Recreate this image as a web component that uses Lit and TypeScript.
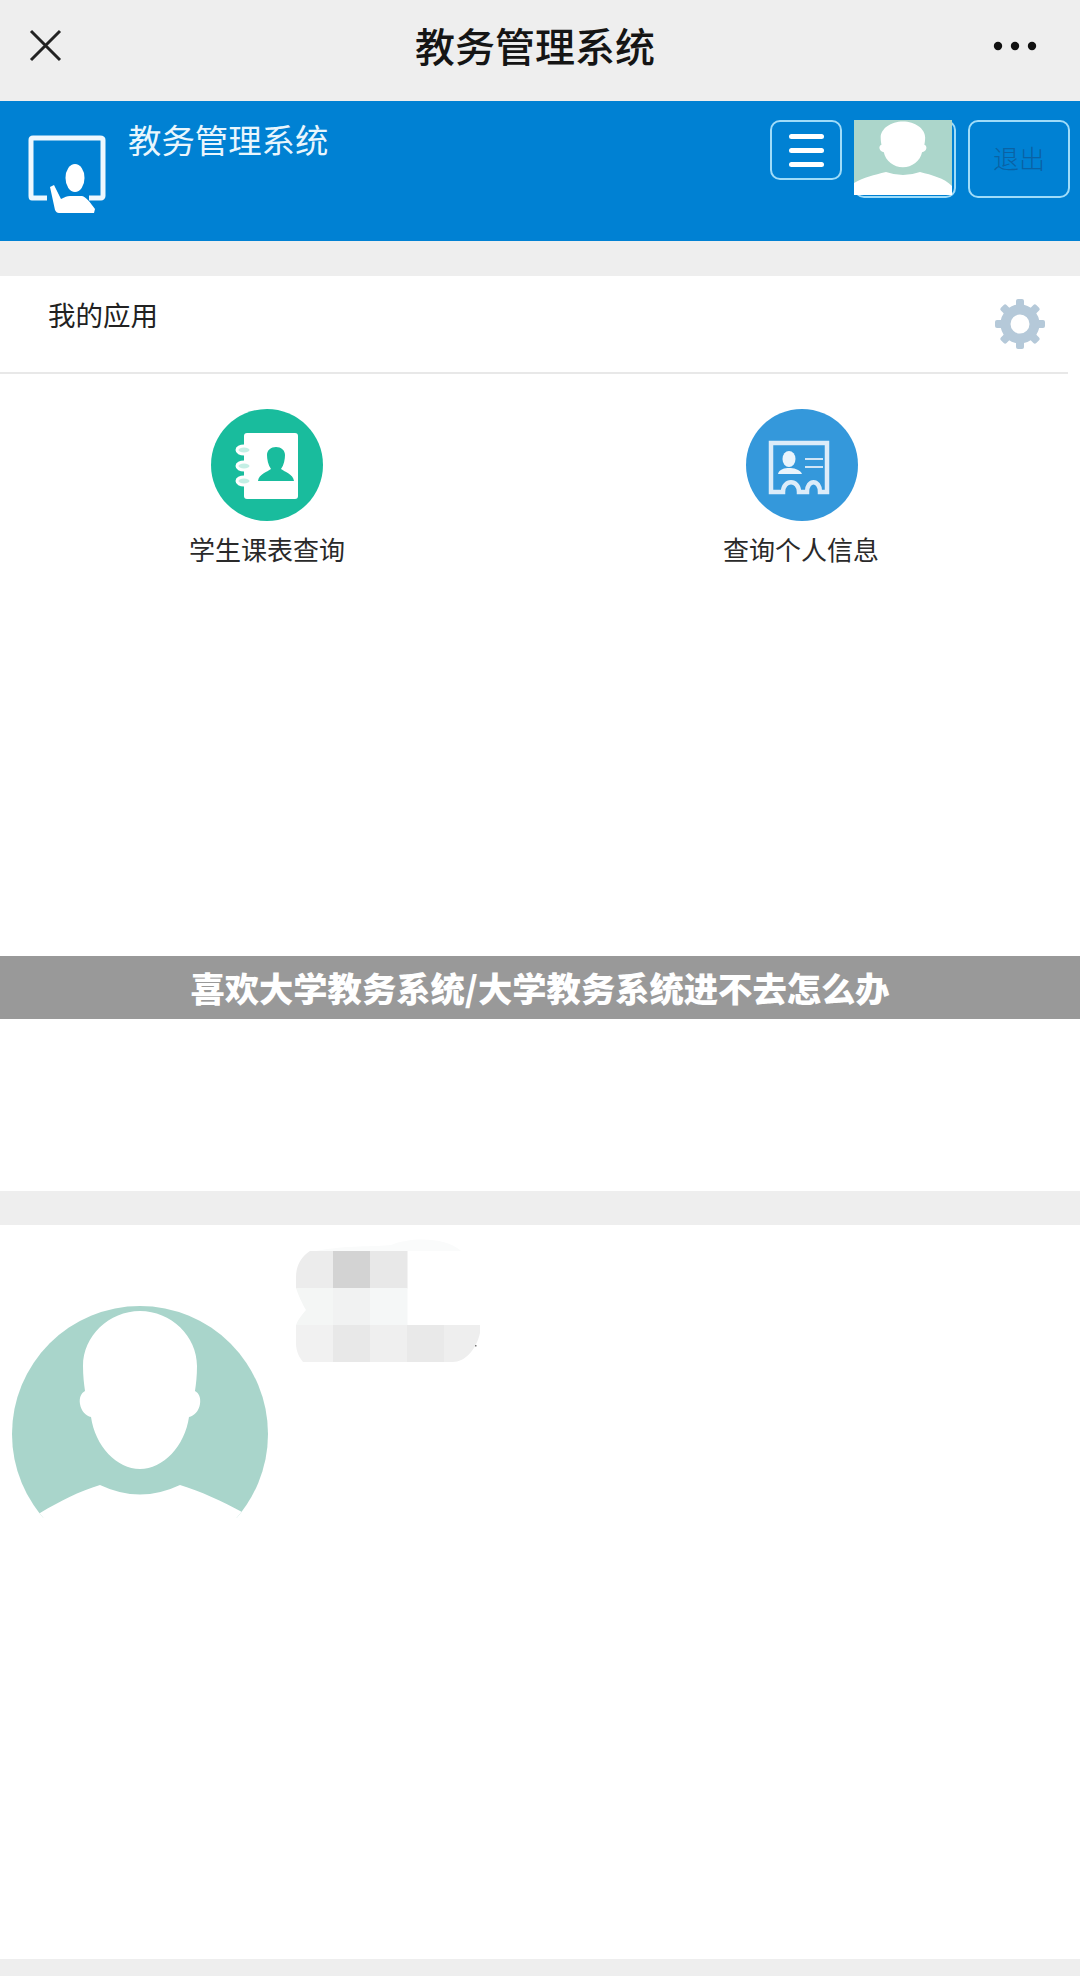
import { LitElement, html, css, svg } from "lit";
import { customElement } from "lit/decorators.js";

const headPath = "M128 5C97 5 71 30 71 60C71 70 72 78 73 85C69 87 67 92 68 98C69 105 74 110 79 111C83 140 105 163 128 163C151 163 173 140 177 111C182 110 187 105 188 98C189 92 187 87 183 85C184 78 185 70 185 60C185 30 159 5 128 5Z";

const pixels: [number, number, string][] = [
  [0, 0, "#ececec"], [1, 0, "#d3d3d3"], [2, 0, "#e8e8e8"],
  [0, 1, "#f4f6f5"], [1, 1, "#f1f2f2"], [2, 1, "#f5f7f7"],
  [0, 2, "#f1f1f1"], [1, 2, "#e8e8e8"], [2, 2, "#efefef"], [3, 2, "#e9e9e9"], [4, 2, "#eeeeee"],
];

const teeth = [0, 45, 90, 135, 180, 225, 270, 315];

@customElement("app-root")
export class AppRoot extends LitElement {
  static styles = css`
    :host { display: block; width: 1080px; height: 1976px; background: #eeeeee; font-family: "Noto Sans CJK SC", "Noto Sans", sans-serif; overflow: hidden; }
    * { box-sizing: border-box; }
    svg { display: block; }
    .topbar { height: 101px; display: flex; align-items: center; justify-content: space-between; padding: 0 41px 10px 28px; background: #eeeeee; }
    .top-title { font-size: 40px; line-height: 56px; font-weight: 500; color: #151515; margin-left: 14px; padding-bottom: 2px; }
    .banner-head { height: 140px; background: #0081d3; display: flex; padding: 19px 10px 0 28px; }
    .logo { margin-top: 15px; flex: none; }
    .head-title { font-size: 33.4px; line-height: 46px; color: #e9f6fd; margin-left: 20px; margin-top: -4px; flex: 1; }
    .head-btns { display: flex; gap: 12px; align-items: flex-start; }
    .btn { border: 2px solid #9fdcf9; border-radius: 10px; display: flex; align-items: center; justify-content: center; }
    .menu { width: 72px; height: 60px; flex-direction: column; gap: 9px; padding-top: 1px; }
    .menu span { display: block; width: 35px; height: 5px; background: #ffffff; border-radius: 3px; }
    .avatar-btn { width: 102px; height: 78px; align-items: flex-start; justify-content: flex-start; }
    .avatar-btn svg { margin: -2px 0 0 -2px; }
    .exit { width: 102px; height: 78px; font-size: 26px; color: #0a62a4; font-weight: 300; padding-bottom: 4px; }
    .card { background: #ffffff; margin-top: 35px; height: 915px; }
    .card-head { width: 1068px; height: 98px; border-bottom: 2px solid #e8e8e8; display: flex; align-items: flex-start; justify-content: space-between; padding: 19px 13px 0 48px; font-size: 27.5px; line-height: 38px; color: #222222; }
    .gear { margin-right: 9px; margin-top: 3px; }
    .apps { width: 1068px; display: grid; grid-template-columns: 1fr 1fr; padding-top: 35px; }
    .app { display: flex; flex-direction: column; align-items: center; gap: 10px; }
    .app-label { font-size: 26px; line-height: 36px; color: #2a2a2a; white-space: nowrap; }
    .nudge { margin-left: 2px; }
    .notice { margin-top: 389px; height: 63px; background: #999999; color: #ffffff; font-size: 34.3px; font-weight: 900; line-height: 63px; text-align: center; white-space: nowrap; }
    .profile { background: #ffffff; margin-top: 34px; height: 734px; display: flex; align-items: flex-start; padding-left: 12px; }
    .big-avatar { margin-top: 81px; flex: none; }
    .mosaic { margin-left: 28px; margin-top: 12px; flex: none; }
  `;

  private personSmall() {
    return html`<svg width="98" height="76" viewBox="0 0 98 76">
      <rect width="98" height="75" fill="#acd6cb"></rect>
      <g transform="translate(-1 0) scale(0.39 0.29)" fill="#fff"><path d="${headPath}"></path></g>
      <path d="M0 63C10 57 20 55 32 52Q49 58 66 52C78 55 90 58 98 66V75H0Z" fill="#fff"></path>
    </svg>`;
  }

  render() {
    return html`
      <div class="topbar">
        <svg width="35" height="35" viewBox="0 0 35 35"><path d="M3 3L32 32M32 3L3 32" stroke="#222" stroke-width="3" fill="none"></path></svg>
        <div class="top-title">教务管理系统</div>
        <svg width="46" height="10" viewBox="0 0 46 10" fill="#111"><circle cx="5" cy="5" r="4.2"></circle><circle cx="22" cy="5" r="4.2"></circle><circle cx="39" cy="5" r="4.2"></circle></svg>
      </div>
      <div class="banner-head">
        <svg class="logo" width="80" height="80" viewBox="0 0 80 80">
          <path d="M19 63H4C3 63 3 62 3 61V5C3 4 3 3 5 3H72C74 3 75 4 75 5V61C75 62 74 63 73 63H61" fill="none" stroke="#eef8fe" stroke-width="5"></path>
          <ellipse cx="47" cy="43" rx="9.5" ry="14" fill="#fff"></ellipse>
          <path d="M22 52L26 50L33 64C37 62 39 61 42 61H54C58 62 62 67 67 74L66 78H31C29 78 28 77 27 75Z" fill="#fff"></path>
        </svg>
        <div class="head-title">教务管理系统</div>
        <div class="head-btns">
          <div class="btn menu"><span></span><span></span><span></span></div>
          <div class="btn avatar-btn">${this.personSmall()}</div>
          <div class="btn exit">退出</div>
        </div>
      </div>
      <div class="card">
        <div class="card-head">
          <span>我的应用</span>
          <svg class="gear" width="52" height="52" viewBox="0 0 52 52" fill="#b5c9d9">
            ${teeth.map((a) => svg`<rect x="22" y="1" width="8" height="10" rx="2" transform="rotate(${a} 26 26)"></rect>`)}
            <circle cx="26" cy="26" r="14.5" fill="none" stroke="#b5c9d9" stroke-width="10"></circle>
          </svg>
        </div>
        <div class="apps">
          <div class="app">
            <svg width="112" height="112" viewBox="0 0 112 112">
              <circle cx="56" cy="56" r="56" fill="#19bc9d"></circle>
              <rect x="33" y="24" width="54" height="66" rx="3" fill="#fff"></rect>
              <g fill="#c5efe5" stroke="#fff" stroke-width="3">
                <ellipse cx="33" cy="41" rx="7" ry="4"></ellipse>
                <ellipse cx="33" cy="57" rx="7" ry="4"></ellipse>
                <ellipse cx="33" cy="72" rx="7" ry="4"></ellipse>
              </g>
              <path d="M47 72C48 65 56 63 60 60C57 56 56 50 56 46C56 41 60 38 65 38C70 38 74 41 74 46C74 50 73 56 70 60C74 63 82 65 83 72Z" fill="#19bc9d"></path>
            </svg>
            <div class="app-label">学生课表查询</div>
          </div>
          <div class="app">
            <svg class="nudge" width="112" height="112" viewBox="0 0 112 112">
              <circle cx="56" cy="56" r="56" fill="#3498db"></circle>
              <path d="M25 34H81V83H74C74 70 61 70 61 83H53C53 70 37 70 37 83H25Z" fill="none" stroke="#dcecf9" stroke-width="4.5"></path>
              <ellipse cx="43" cy="50" rx="6.5" ry="8" fill="#eaf4fc"></ellipse>
              <path d="M32 65C33 60 39 59 43 59C47 59 54 60 56 65Z" fill="#eaf4fc"></path>
              <path d="M59 50H77M59 58H77" stroke="#cfe5f6" stroke-width="2"></path>
            </svg>
            <div class="app-label">查询个人信息</div>
          </div>
        </div>
        <div class="notice">喜欢大学教务系统/大学教务系统进不去怎么办</div>
      </div>
      <div class="profile">
        <svg class="big-avatar" width="256" height="212" viewBox="0 0 256 212">
          <defs><clipPath id="round"><circle cx="128" cy="128" r="128"></circle></clipPath></defs>
          <g clip-path="url(#round)">
            <rect width="256" height="212" fill="#a9d5cb"></rect>
            <path d="${headPath}" fill="#fff"></path>
            <path d="M28 207C48 195 68 185 88 179Q128 198 168 179C188 185 210 195 230 206L256 212H0Z" fill="#fff"></path>
          </g>
        </svg>
        <svg class="mosaic" width="190" height="128" viewBox="0 -14 190 128">
          <defs><clipPath id="mos"><path d="M14 0H184V82C180 100 168 111 157 111H7C3 106 0 100 0 92V74C2 68 6 64 10 59C6 52 3 46 0 37V26C0 14 6 5 14 0Z"></path></clipPath></defs>
          <path d="M20 0C50 -6 80 -4 95 -6C115 -14 150 -14 165 0Z" fill="#fafbfb"></path>
          <g clip-path="url(#mos)">
            ${pixels.map(([c, r, col]) => svg`<rect x="${c * 37}" y="${r * 37}" width="37.5" height="37.5" fill="${col}"></rect>`)}
          </g>
          <rect x="179" y="94" width="1.5" height="1.5" fill="#777"></rect>
        </svg>
      </div>
    `;
  }
}
